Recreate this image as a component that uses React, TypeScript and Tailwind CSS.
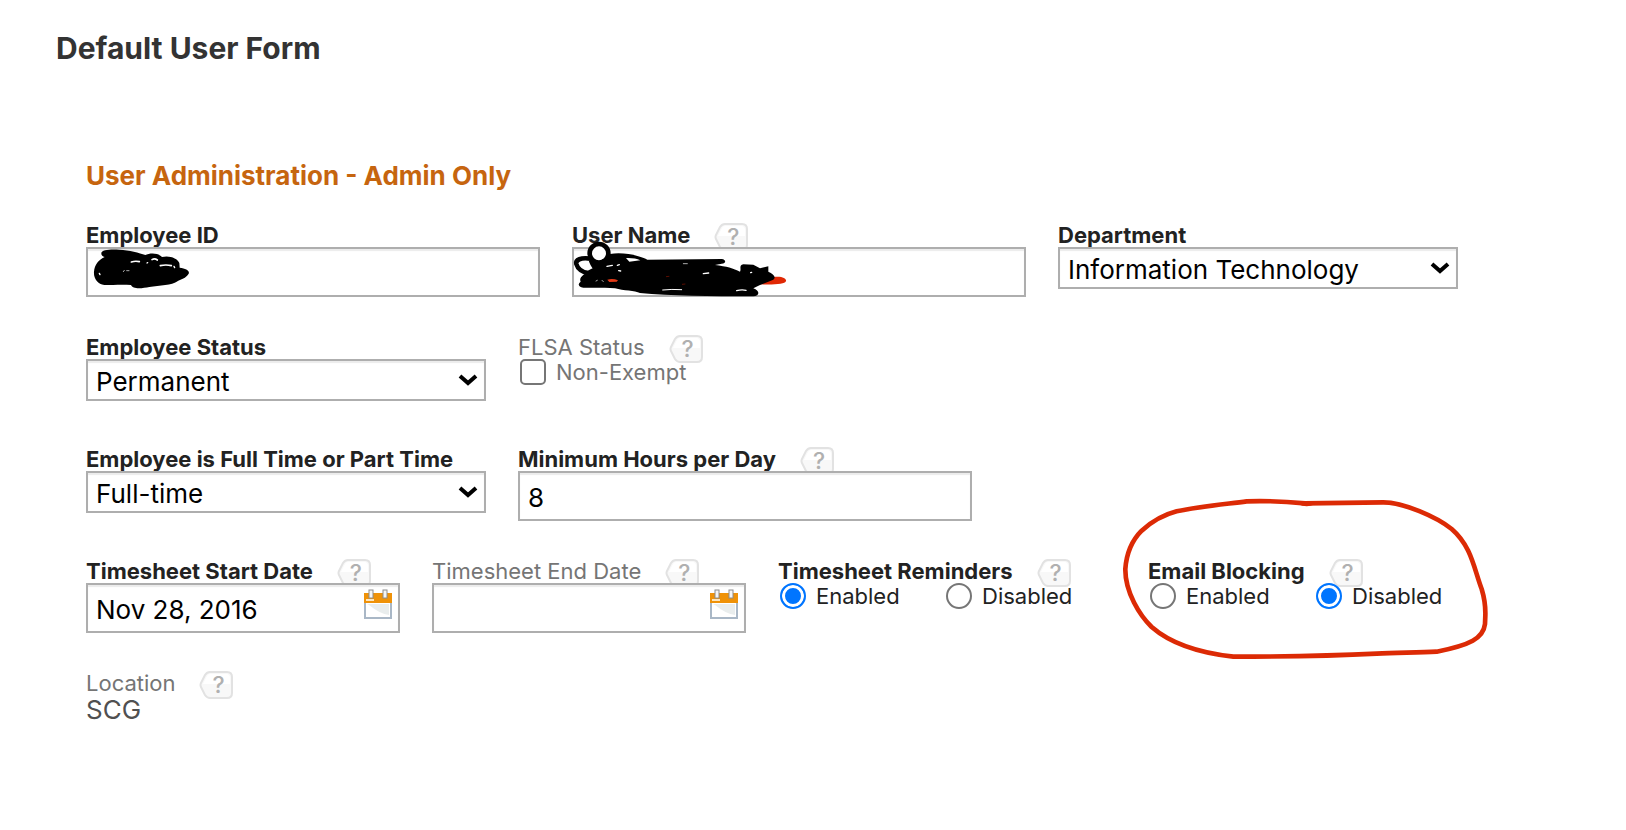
import { useState, type ReactNode } from "react";

const BOX = "relative block max-w-full rounded-none border-2 border-[#aeaeae] bg-white px-2 text-[26px] text-black shadow-[inset_0_2px_1px_#ececec] focus:outline-none focus:border-blue-500";

function HelpButton({ topic }: { topic: string }) {
    return (
        <button type="button" aria-label={`Help: ${topic}`} className="relative h-7 w-[34px] shrink-0 text-[#b0b0b0]">
            <svg viewBox="0 0 34 28" className="absolute inset-0 h-full w-full" aria-hidden="true">
                <path
                    d="M11 1H28Q33 1 33 6V22Q33 27 28 27H11Q8 27 6 24L2 16Q1 14 2 12L6 4Q8 1 11 1Z"
                    fill="#f8f8f8"
                    stroke="#e2e2e2"
                    strokeWidth="2"
                />
                <path d="M11 3H27Q31 3 31 7V13H4L8 5Q9 3 11 3Z" fill="#fff" />
            </svg>
            <span className="relative block pl-1 text-center text-[23px] leading-7 font-medium">?</span>
        </button>
    );
}

type FieldProps = {
    id: string;
    label: string;
    optional?: boolean;
    help?: boolean;
    group?: boolean;
    children: ReactNode;
};

function Field({ id, label, optional, help, group, children }: FieldProps) {
    const tone = optional ? "text-[#757575]" : "font-bold text-[#222]";

    return (
        <div className="relative max-w-full">
            <div className="flex h-6 items-start gap-6 whitespace-nowrap">
                {group ? (
                    <span id={id} className={tone}>{label}</span>
                ) : (
                    <label htmlFor={id} className={tone}>{label}</label>
                )}
                {help && <HelpButton topic={label} />}
            </div>
            {children}
        </div>
    );
}

function SelectBox({ id, options }: { id: string; options: string[] }) {
    return (
        <div className="relative w-[400px] max-w-full">
            <select id={id} className={`${BOX} h-[42px] w-full appearance-none pt-1 leading-[34px]`}>
                {options.map((option) => (
                    <option key={option}>{option}</option>
                ))}
            </select>
            <svg viewBox="0 0 20 13" className="pointer-events-none absolute top-3.5 right-2 h-[13px] w-5" aria-hidden="true">
                <path d="M2 3L10 10L18 3" fill="none" stroke="#000" strokeWidth="4" />
            </svg>
        </div>
    );
}

function CalendarIcon() {
    return (
        <svg viewBox="0 0 28 30" className="h-[30px] w-7" aria-hidden="true">
            <rect x="1" y="12" width="26" height="17" fill="#fff" stroke="#a9b7c6" strokeWidth="2" />
            <path d="M3 15H25V26Q16 25 5 16Z" fill="#e9eded" />
            <rect y="4" width="28" height="10" fill="#ef9208" />
            <rect x="2" y="10" width="8" height="2" fill="#fde5bd" />
            <rect x="5" y="1" width="4" height="8" fill="#f5f5f5" stroke="#8c8c8c" strokeWidth="1" />
            <rect x="19" y="1" width="4" height="8" fill="#f5f5f5" stroke="#8c8c8c" strokeWidth="1" />
        </svg>
    );
}

function DateBox({ id, initial, name }: { id: string; initial: string; name: string }) {
    return (
        <div className="relative w-[314px] max-w-full">
            <input id={id} type="text" defaultValue={initial} className={`${BOX} h-[50px] w-full pt-[3px] pr-10`} />
            <button type="button" aria-label={`Pick ${name}`} className="absolute top-1.5 right-2">
                <CalendarIcon />
            </button>
        </div>
    );
}

function ToggleGroup({ name, initial }: { name: string; initial: string }) {
    const [value, setValue] = useState(initial);

    return (
        <div role="radiogroup" aria-labelledby={name} className="relative flex w-[338px] max-w-full pl-[2px]">
            {["Enabled", "Disabled"].map((option) => (
                <label key={option} className="flex h-[26px] w-[166px] items-center gap-2.5 text-[#222]">
                    <input
                        type="radio"
                        name={name}
                        checked={value === option}
                        onChange={() => setValue(option)}
                        className="size-[26px] shrink-0 appearance-none rounded-full border-2 border-[#767676] bg-white checked:border-[#0075ff] checked:bg-[#0075ff] checked:shadow-[inset_0_0_0_3px_#fff]"
                    />
                    {option}
                </label>
            ))}
        </div>
    );
}

function IdScribble() {
    return (
        <svg viewBox="0 0 360 180" className="pointer-events-none absolute top-4 left-0 h-[60px] w-[120px]" aria-hidden="true">
            <path d="M46 42C46 32 75 30 100 32C130 33 160 42 178 48C190 42 215 40 228 54C250 48 275 58 280 72L281 86C300 88 312 96 308 104C300 118 285 120 272 128C260 138 220 138 190 144C170 148 140 152 135 138C110 136 80 138 55 138C35 136 22 118 24 98C26 78 36 64 56 54C48 52 46 48 46 42Z" />
            <g fill="none" stroke="#fff" strokeWidth="5" strokeLinecap="round">
                <path d="M136 69Q148 65 160 68M198 62Q206 57 214 63M223 80Q240 76 256 80" />
                <path d="M183 72L185 71M40 103L42 107M264 82L266 86" strokeWidth="4" />
                <path d="M112 98L115 94M122 95L129 95" strokeWidth="2" />
            </g>
        </svg>
    );
}

function NameScribble() {
    return (
        <svg viewBox="30 90 669 180" className="pointer-events-none absolute top-4 -left-0.5 h-[60px] w-[223px]" aria-hidden="true">
            <path d="M595 226L640 204C665 200 680 208 678 216C675 226 640 228 595 226Z" fill="#e02804" />
            <path d="M62 218C55 205 75 195 85 186L110 160L150 135C190 128 240 140 262 152L485 150C500 152 498 164 485 164L465 168C500 172 520 178 540 188C545 180 535 170 550 166L580 167L600 178L625 172L625 188C640 195 650 205 640 212L600 228L580 238C600 245 600 260 580 262C450 262 330 260 240 252C225 245 190 245 165 238C140 234 110 238 70 236C55 234 52 225 62 218Z" />
            <path d="M198 147Q225 146 241 154L208 158Z" fill="#fff" />
            <g fill="none" stroke="#000" strokeWidth="14">
                <path d="M92 149C62 145 46 152 49 165C53 180 68 190 85 192L108 180C98 168 94 160 92 149Z" fill="#fff" />
                <circle cx="117" cy="133" r="28" fill="#fff" />
                <path d="M128 158Q150 148 170 158" />
            </g>
            <g fill="none" stroke="#fff" strokeWidth="4" strokeLinecap="round">
                <path d="M141 172L157 169M172 169L178 167M176 185L182 186M430 194L446 192M572 191L575 190M530 245Q545 241 558 244" />
                <path d="M308 243Q335 240 365 242" strokeWidth="3" />
                <path d="M108 216L112 214M126 214L130 218M370 164L382 164" strokeWidth="2" />
            </g>
            <path d="M142 212Q158 207 174 214L170 218L148 219Z" fill="#e33a17" />
            <path d="M318 203L328 202M366 226L376 225" stroke="#5a0d00" strokeWidth="3" />
        </svg>
    );
}

function RedCircle() {
    return (
        <svg viewBox="0 0 1200 540" className="pointer-events-none absolute -top-[70px] -left-[38px] h-[180px] w-[400px]" aria-hidden="true">
            <path
                d="M410 37C460 35 530 38 585 43L820 40C880 40 980 84 1025 120C1085 172 1092 240 1115 300C1124 330 1127 350 1126 380L1125 405C1120 448 1080 468 980 488C920 492 860 490 800 494C640 502 490 503 370 503C270 492 180 462 125 414C90 380 45 310 46 240C50 185 70 150 95 125C125 98 165 76 200 67C270 52 340 46 410 37Z"
                fill="none"
                stroke="#dc2a05"
                strokeWidth="14"
                strokeLinejoin="round"
            />
            <path d="M565 42Q588 54 612 44" fill="none" stroke="#dc2a05" strokeWidth="6" />
        </svg>
    );
}

function Row({ children }: { children: ReactNode }) {
    return <div className="flex min-h-28 flex-wrap items-start gap-x-8">{children}</div>;
}

export default function App() {
    return (
        <main className="min-h-screen overflow-x-hidden bg-white px-14 pt-7 font-['Inter',sans-serif] text-[22px] leading-6">
            <h1 className="text-[30px] leading-10 font-bold text-[#333]">Default User Form</h1>

            <form className="mt-[92px] pl-[30px]" onSubmit={(e) => e.preventDefault()}>
                <h2 className="mb-[31px] text-[26px] leading-8 font-bold text-[#c6650f]">
                    User Administration - Admin Only
                </h2>

                <Row>
                    <Field id="employee-id" label="Employee ID">
                        <input id="employee-id" type="text" className={`${BOX} h-[50px] w-[454px] pt-[3px]`} />
                        <IdScribble />
                    </Field>
                    <Field id="user-name" label="User Name" help>
                        <input id="user-name" type="text" className={`${BOX} h-[50px] w-[454px] pt-[3px]`} />
                        <NameScribble />
                    </Field>
                    <Field id="department" label="Department">
                        <SelectBox id="department" options={["Information Technology"]} />
                    </Field>
                </Row>

                <Row>
                    <Field id="employee-status" label="Employee Status">
                        <SelectBox id="employee-status" options={["Permanent"]} />
                    </Field>
                    <Field id="flsa-status" label="FLSA Status" optional help group>
                        <label className="relative flex h-[26px] items-center gap-2.5 pl-[2px] text-[#757575]">
                            <input
                                type="checkbox"
                                aria-describedby="flsa-status"
                                className="size-[26px] shrink-0 appearance-none rounded-[5px] border-2 border-[#767676] bg-white checked:bg-[#0075ff]"
                            />
                            Non-Exempt
                        </label>
                    </Field>
                </Row>

                <Row>
                    <Field id="employment-type" label="Employee is Full Time or Part Time">
                        <SelectBox id="employment-type" options={["Full-time", "Part-time"]} />
                    </Field>
                    <Field id="minimum-hours" label="Minimum Hours per Day" help>
                        <input id="minimum-hours" type="text" defaultValue="8" className={`${BOX} h-[50px] w-[454px] pt-[3px]`} />
                    </Field>
                </Row>

                <Row>
                    <Field id="start-date" label="Timesheet Start Date" help>
                        <DateBox id="start-date" name="start date" initial="Nov 28, 2016" />
                    </Field>
                    <Field id="end-date" label="Timesheet End Date" optional help>
                        <DateBox id="end-date" name="end date" initial="" />
                    </Field>
                    <Field id="reminders" label="Timesheet Reminders" help group>
                        <ToggleGroup name="reminders" initial="Enabled" />
                    </Field>
                    <Field id="email-blocking" label="Email Blocking" help group>
                        <ToggleGroup name="email-blocking" initial="Disabled" />
                        <RedCircle />
                    </Field>
                </Row>

                <Row>
                    <Field id="location" label="Location" optional help group>
                        <p aria-labelledby="location" className="text-[26px] leading-[30px] text-[#505050]">SCG</p>
                    </Field>
                </Row>
            </form>
        </main>
    );
}
